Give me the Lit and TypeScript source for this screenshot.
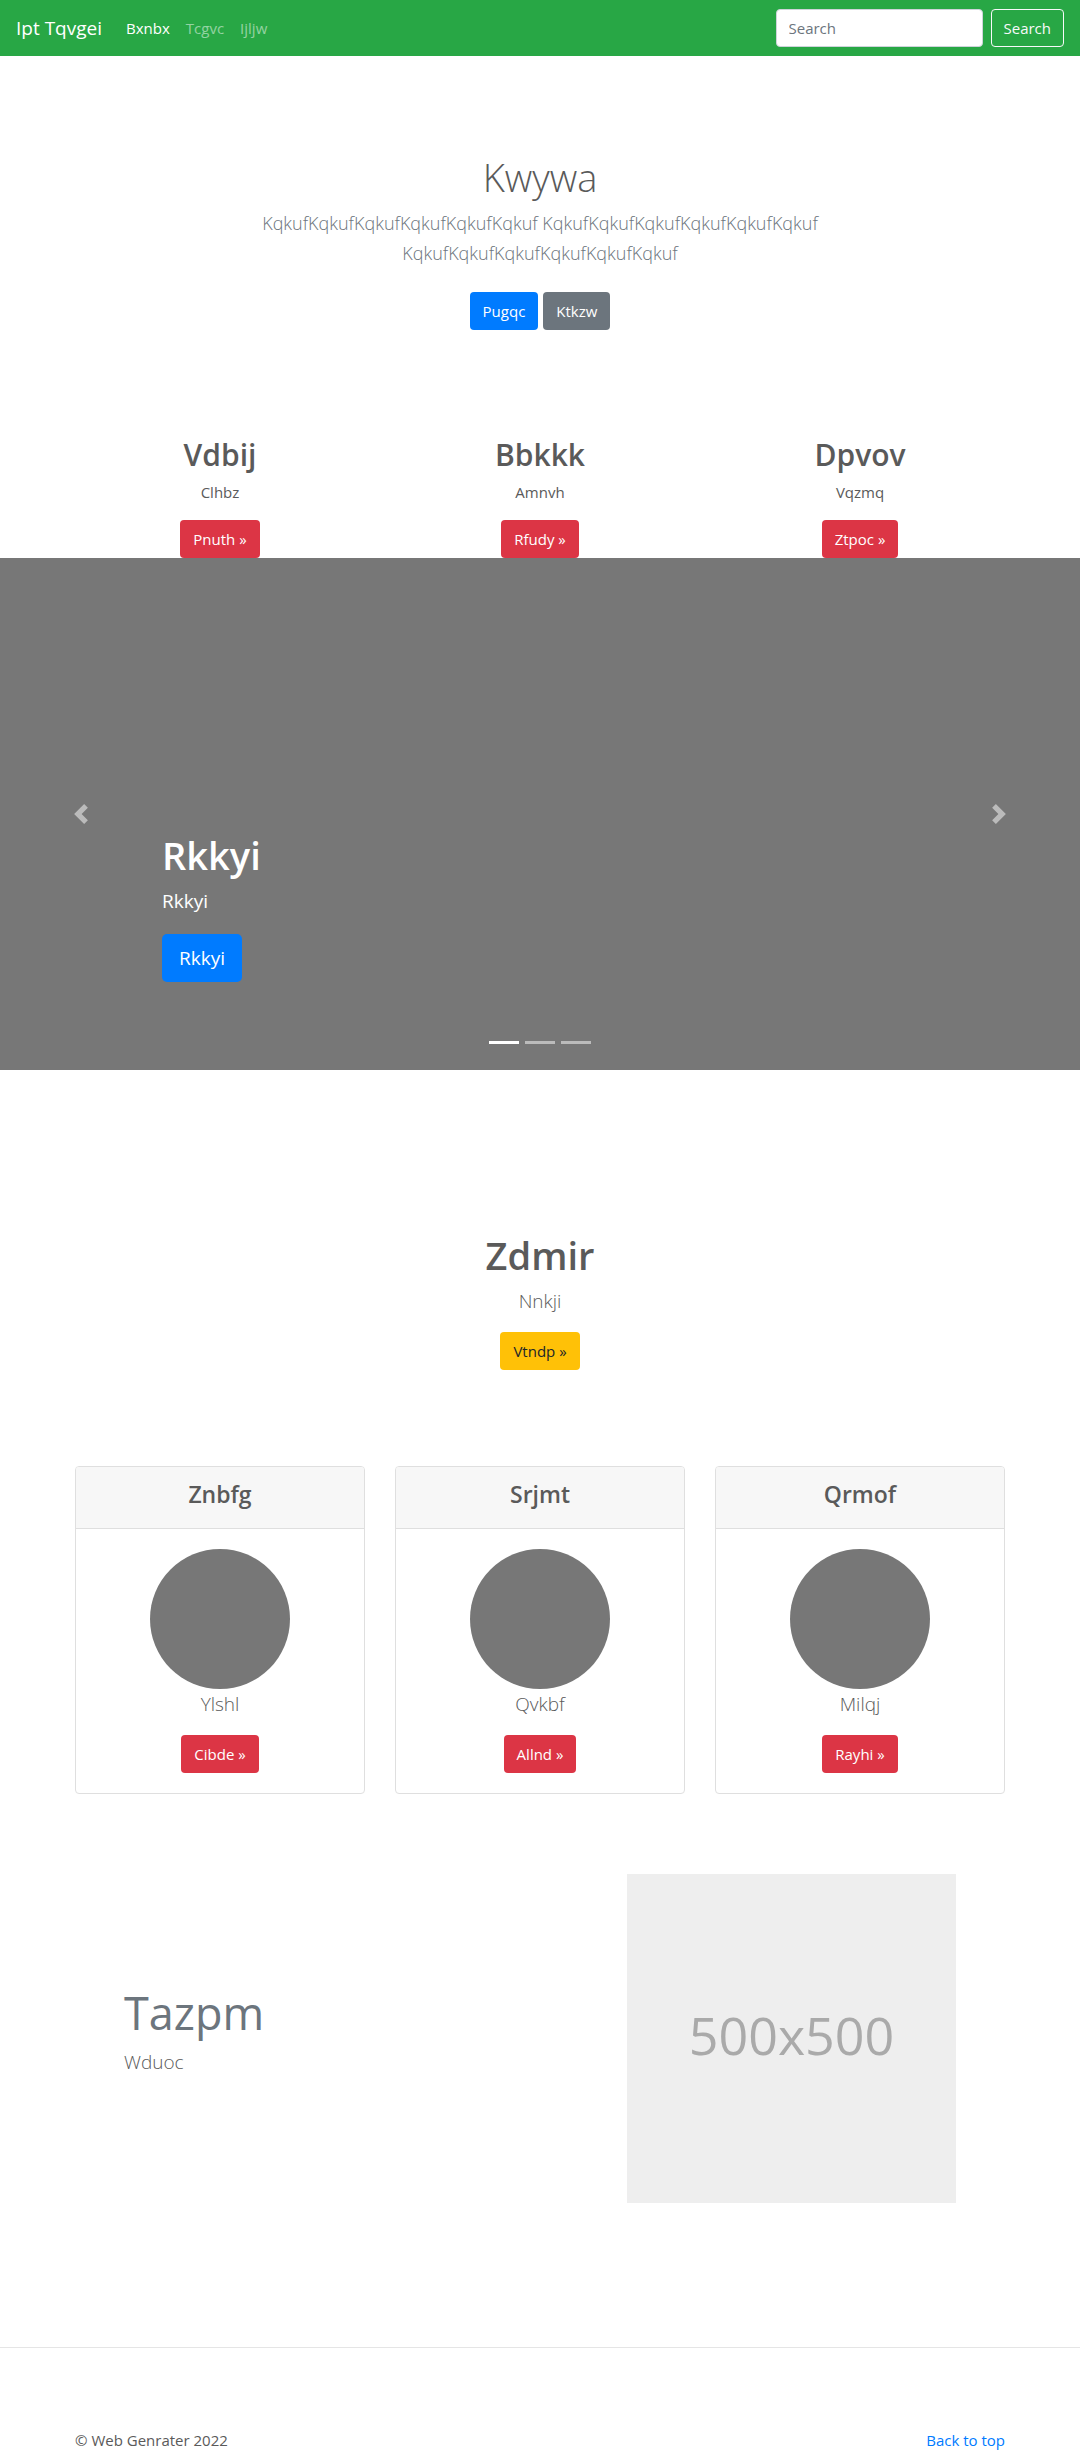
import { LitElement, html, css } from "lit";
import { customElement, state } from "lit/decorators.js";

interface Topic {
  title: string;
  text: string;
  action: string;
}

const topics: Topic[] = [
  { title: "Vdbij", text: "Clhbz", action: "Pnuth" },
  { title: "Bbkkk", text: "Amnvh", action: "Rfudy" },
  { title: "Dpvov", text: "Vqzmq", action: "Ztpoc" },
];

const cards: Topic[] = [
  { title: "Znbfg", text: "Ylshl", action: "Cibde" },
  { title: "Srjmt", text: "Qvkbf", action: "Allnd" },
  { title: "Qrmof", text: "Milqj", action: "Rayhi" },
];

const navLinks = ["Bxnbx", "Tcgvc", "Ijljw"];

@customElement("app-root")
export class AppRoot extends LitElement {
  @state() private slide = 0;

  static styles = css`
    :host {
      display: block;
      background: #fff;
      color: #5a5a5a;
      font-family: "Open Sans", "Noto Sans", sans-serif;
      font-size: 15px;
      line-height: 24px;
    }
    *,
    *::before,
    *::after {
      box-sizing: border-box;
    }
    h1,
    h2,
    h3,
    p {
      margin: 0;
    }
    a {
      color: #007bff;
      text-decoration: none;
    }

    .btn {
      display: inline-block;
      padding: 6px 12px;
      border: 1px solid transparent;
      border-radius: 4px;
      color: #fff;
      background: transparent;
      font: inherit;
      cursor: pointer;
    }
    .primary {
      background: #007bff;
    }
    .secondary {
      background: #6c757d;
    }
    .danger {
      background: #dc3545;
    }
    .warning {
      background: #ffc107;
      color: #212529;
    }
    .outline {
      border-color: #f8f9fa;
      color: #f8f9fa;
    }
    .large {
      padding: 8px 16px;
      border-radius: 5px;
      font-size: 19px;
      line-height: 30px;
    }

    .navbar {
      display: flex;
      align-items: center;
      padding: 8px 16px;
      background: #28a745;
    }
    .brand {
      margin-right: 16px;
      color: #fff;
      font-size: 19px;
      line-height: 30px;
    }
    .nav {
      display: flex;
      flex: 1;
    }
    .nav-link {
      display: block;
      padding: 8px;
      color: rgba(255, 255, 255, 0.5);
    }
    .nav-link.active {
      color: #fff;
    }
    .search {
      display: flex;
      gap: 8px;
      margin: 1px 0;
    }
    .search-input {
      width: 207px;
      padding: 6px 12px;
      border: 1px solid #ced4da;
      border-radius: 4px;
      background: #fff;
      color: #495057;
      font: inherit;
    }
    .search-input::placeholder {
      color: #6c757d;
      opacity: 1;
    }

    .container {
      max-width: 960px;
      margin: 0 auto;
      padding: 0 15px;
    }
    .display {
      margin-bottom: 6px;
      font-size: 38px;
      font-weight: 600;
      line-height: 50px;
    }
    .lead {
      font-size: 19px;
      font-weight: 300;
      line-height: 30px;
    }

    .hero {
      padding: 96px 15px 104px;
      text-align: center;
    }
    .hero .display {
      font-weight: 300;
    }
    .hero .lead {
      max-width: 610px;
      margin: 0 auto;
      color: #6c757d;
      font-size: 18px;
    }
    .hero-actions {
      display: flex;
      justify-content: center;
      gap: 5px;
      margin-top: 24px;
    }

    .thirds {
      display: grid;
      grid-template-columns: repeat(3, 1fr);
      gap: 30px;
      text-align: center;
    }
    .topic-title {
      margin-bottom: 4px;
      font-size: 30px;
      font-weight: 600;
      line-height: 42px;
    }
    .topic-text {
      margin-bottom: 16px;
    }

    .carousel {
      position: relative;
      display: flex;
      align-items: flex-end;
      height: 512px;
      padding: 0 15%;
      background: #777;
      color: #fff;
    }
    .caption {
      padding-bottom: 88px;
    }
    .caption-text {
      margin-bottom: 18px;
      font-size: 19px;
      line-height: 30px;
    }
    .control {
      position: absolute;
      top: 0;
      bottom: 0;
      display: flex;
      align-items: center;
      justify-content: center;
      width: 15%;
      padding: 0;
      border: 0;
      background: none;
      color: #fff;
      opacity: 0.5;
      cursor: pointer;
    }
    .prev {
      left: 0;
    }
    .next {
      right: 0;
    }
    .control-icon {
      width: 20px;
      height: 20px;
      fill: currentColor;
    }
    .indicators {
      position: absolute;
      right: 15%;
      bottom: 16px;
      left: 15%;
      display: flex;
      justify-content: center;
      gap: 6px;
    }
    .indicator {
      width: 30px;
      height: 23px;
      padding: 0;
      border: 10px solid transparent;
      border-width: 10px 0;
      background: #fff;
      background-clip: padding-box;
      opacity: 0.5;
      cursor: pointer;
    }
    .indicator.active {
      opacity: 1;
    }

    .intro {
      padding: 160px 15px 96px;
      text-align: center;
    }
    .intro .lead {
      margin-bottom: 16px;
    }

    .card {
      border: 1px solid #dfdfdf;
      border-radius: 4px;
      overflow: hidden;
    }
    .card-header {
      padding: 12px 20px 18px;
      border-bottom: 1px solid #dfdfdf;
      background: #f7f7f7;
    }
    .card-title {
      font-size: 23px;
      font-weight: 600;
      line-height: 31px;
    }
    .card-body {
      padding: 20px;
    }
    .avatar {
      display: block;
      width: 140px;
      height: 140px;
      margin: 0 auto;
      border-radius: 50%;
      background: #777;
    }
    .card .lead {
      margin-bottom: 16px;
    }

    .feature {
      display: grid;
      grid-template-columns: 1fr 329px;
      align-items: center;
      margin: 80px 49px 144px;
    }
    .feature-text {
      padding-bottom: 18px;
    }
    .feature-title {
      margin-bottom: 4px;
      color: #6c757d;
      font-size: 45px;
      font-weight: 400;
      line-height: 60px;
    }
    .placeholder {
      display: flex;
      align-items: center;
      justify-content: center;
      aspect-ratio: 1;
      padding-bottom: 8px;
      background: #eee;
      color: #aaa;
      font-size: 52px;
      line-height: 64px;
    }

    .divider {
      margin: 0;
      border: 0;
      border-top: 1px solid #e5e5e5;
    }
    .footer {
      display: flex;
      justify-content: space-between;
      padding-top: 80px;
    }
  `;

  private move(step: number) {
    this.slide = (this.slide + step + 3) % 3;
  }

  render() {
    return html`
      <header class="navbar">
        <a class="brand" href="#">Ipt Tqvgei</a>
        <nav class="nav" aria-label="Main">
          ${navLinks.map(
            (label, i) =>
              html`<a class="nav-link ${i === 0 ? "active" : ""}" href="#">${label}</a>`,
          )}
        </nav>
        <form class="search" @submit=${(e: Event) => e.preventDefault()}>
          <input class="search-input" type="search" placeholder="Search" aria-label="Search" />
          <button class="btn outline" type="submit">Search</button>
        </form>
      </header>

      <main>
        <section class="hero">
          <h1 class="display">Kwywa</h1>
          <p class="lead">
            KqkufKqkufKqkufKqkufKqkufKqkuf KqkufKqkufKqkufKqkufKqkufKqkuf
            KqkufKqkufKqkufKqkufKqkufKqkuf
          </p>
          <div class="hero-actions">
            <a class="btn primary" href="#">Pugqc</a>
            <a class="btn secondary" href="#">Ktkzw</a>
          </div>
        </section>

        <section class="container">
          <div class="thirds">
            ${topics.map(
              (t) => html`
                <article>
                  <h2 class="topic-title">${t.title}</h2>
                  <p class="topic-text">${t.text}</p>
                  <a class="btn danger" href="#">${t.action} »</a>
                </article>
              `,
            )}
          </div>
        </section>

        <section class="carousel">
          <div class="caption">
            <h2 class="display">Rkkyi</h2>
            <p class="caption-text">Rkkyi</p>
            <a class="btn primary large" href="#">Rkkyi</a>
          </div>
          <button class="control prev" aria-label="Previous" @click=${() => this.move(-1)}>
            <svg class="control-icon" viewBox="0 0 8 8">
              <path d="M5.25 0l-4 4 4 4 1.5-1.5-2.5-2.5 2.5-2.5-1.5-1.5z" />
            </svg>
          </button>
          <button class="control next" aria-label="Next" @click=${() => this.move(1)}>
            <svg class="control-icon" viewBox="0 0 8 8">
              <path d="M2.75 0l-1.5 1.5 2.5 2.5-2.5 2.5 1.5 1.5 4-4-4-4z" />
            </svg>
          </button>
          <div class="indicators">
            ${[0, 1, 2].map(
              (i) => html`
                <button
                  class="indicator ${i === this.slide ? "active" : ""}"
                  aria-label="Slide ${i + 1}"
                  @click=${() => (this.slide = i)}
                ></button>
              `,
            )}
          </div>
        </section>

        <section class="intro">
          <h2 class="display">Zdmir</h2>
          <p class="lead">Nnkji</p>
          <a class="btn warning" href="#">Vtndp »</a>
        </section>

        <div class="container">
          <section class="thirds">
            ${cards.map(
              (c) => html`
                <article class="card">
                  <header class="card-header">
                    <h3 class="card-title">${c.title}</h3>
                  </header>
                  <div class="card-body">
                    <div class="avatar"></div>
                    <p class="lead">${c.text}</p>
                    <a class="btn danger" href="#">${c.action} »</a>
                  </div>
                </article>
              `,
            )}
          </section>

          <section class="feature">
            <div class="feature-text">
              <h2 class="feature-title">Tazpm</h2>
              <p class="lead">Wduoc</p>
            </div>
            <div class="placeholder">500x500</div>
          </section>
        </div>
      </main>

      <hr class="divider" />
      <footer class="container footer">
        <span>© Web Genrater 2022</span>
        <a href="#">Back to top</a>
      </footer>
    `;
  }
}
